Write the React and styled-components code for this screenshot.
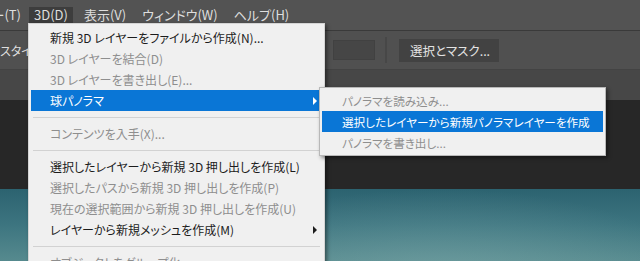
import React from "react";
import styled, { createGlobalStyle } from "styled-components";

const GlobalStyle = createGlobalStyle`
  html, body {
    margin: 0;
    padding: 0;
    background: #282828;
    overflow: hidden;
  }
  body {
    font-family: "Noto Sans CJK JP", "Noto Sans", sans-serif;
    font-feature-settings: "palt";
  }
`;

const Screen = styled.div`
  width: 640px;
  height: 261px;
  display: flex;
  flex-direction: column;
  overflow: hidden;
  position: relative;
`;

const MenuBar = styled.div`
  height: 31px;
  box-sizing: border-box;
  padding-top: 7px;
  display: flex;
  align-items: flex-start;
  gap: 6px;
  background: #535353;
  border-bottom: 1px solid #3a3a3a;
  flex-shrink: 0;
`;

const MenuTitle = styled.div`
  position: relative;
  height: 16px;
  line-height: 16px;
  padding: 0 5px;
  font-size: 13px;
  color: #dedede;
  white-space: nowrap;
  background: ${(p) => (p.$open ? "#3d3d3d" : "transparent")};
`;

const CutTitle = styled(MenuTitle)`
  width: 21px;
  padding: 0 2px 0 0;
  overflow: hidden;
  display: flex;
  justify-content: flex-end;
`;

const OptionsBar = styled.div`
  height: 38px;
  flex-shrink: 0;
  display: flex;
  align-items: center;
  background: #505050;
  border-bottom: 1px solid #434343;
  color: #dedede;
  font-size: 12px;
`;

const OptionLabel = styled.div`
  flex: 0 0 333px;
  white-space: nowrap;
  overflow: hidden;
`;

const Field = styled.div`
  width: 42px;
  height: 20px;
  box-sizing: border-box;
  background: #464646;
  border: 1px solid #414141;
`;

const Divider = styled.div`
  width: 2px;
  height: 26px;
  margin: 0 12px 0 10px;
  background: #474747;
`;

const Button = styled.div`
  width: 100px;
  height: 23px;
  box-sizing: border-box;
  padding-left: 11px;
  line-height: 23px;
  background: #424242;
  color: #e2e2e2;
  font-size: 12.5px;
  white-space: nowrap;
`;

const TabStrip = styled.div`
  height: 30px;
  flex-shrink: 0;
  background: #474747;
`;

const Pasteboard = styled.div`
  height: 89px;
  flex-shrink: 0;
  background: #272727;
`;

const Canvas = styled.div`
  flex: 1;
  background:
    radial-gradient(ellipse 260px 90px at 440px 90px, rgba(140, 180, 180, 0.4), rgba(140, 180, 180, 0) 100%),
    linear-gradient(to bottom, #2c6370 0%, #3d7580 50%, #568a8e 100%);
`;

const Dropdown = styled.div`
  position: absolute;
  left: -1px;
  top: 100%;
  width: 297px;
  box-sizing: border-box;
  padding: 3px 2px;
  background: #f0f0f0;
  border: 1px solid #d4d4d4;
  box-shadow: 2px 2px 4px rgba(0, 0, 0, 0.45);
  z-index: 10;
`;

const Item = styled.div`
  position: relative;
  height: 21px;
  display: flex;
  align-items: center;
  padding: 0 5px 0 19px;
  font-size: 12px;
  white-space: nowrap;
  color: ${(p) => (p.$active ? "#ffffff" : p.$disabled ? "#8e8e8e" : "#1c1c1c")};
  background: ${(p) => (p.$active ? "#0a76d6" : "transparent")};
`;

const ItemLabel = styled.span`
  flex: 1;
`;

const Arrow = styled.span`
  width: 0;
  height: 0;
  border-top: 4px solid transparent;
  border-bottom: 4px solid transparent;
  border-left: 4px solid ${(p) => (p.$light ? "#ffffff" : "#1c1c1c")};
`;

const Separator = styled.div`
  height: 12px;
  display: flex;
  align-items: center;
  padding: 0 2px;
  &::after {
    content: "";
    flex: 1;
    height: 1px;
    background: #d2d2d2;
  }
`;

const SubMenu = styled.div`
  position: absolute;
  left: 288px;
  top: -3px;
  width: 287px;
  box-sizing: border-box;
  padding: 2px 2px;
  background: #f0f0f0;
  border: 1px solid #b8b8b8;
  box-shadow: 2px 2px 4px rgba(0, 0, 0, 0.45);
  z-index: 11;
`;

const SubItem = styled(Item)`
  padding-left: 20px;
  font-size: 11.6px;
`;

const menuItems = [
  { label: "新規 3D レイヤーをファイルから作成(N)..." },
  { label: "3D レイヤーを結合(D)", disabled: true },
  { label: "3D レイヤーを書き出し(E)...", disabled: true },
  { label: "球パノラマ", active: true, sub: true, open: true },
  "sep",
  { label: "コンテンツを入手(X)...", disabled: true },
  "sep",
  { label: "選択したレイヤーから新規 3D 押し出しを作成(L)" },
  { label: "選択したパスから新規 3D 押し出しを作成(P)", disabled: true },
  { label: "現在の選択範囲から新規 3D 押し出しを作成(U)", disabled: true },
  { label: "レイヤーから新規メッシュを作成(M)", sub: true },
  "sep",
  { label: "オブジェクトをグループ化", disabled: true },
];

const panoramaItems = [
  { label: "パノラマを読み込み...", disabled: true },
  { label: "選択したレイヤーから新規パノラマレイヤーを作成", active: true },
  { label: "パノラマを書き出し...", disabled: true },
];

const App = () => {
  return (
    <>
      <GlobalStyle />
      <Screen>
        <MenuBar>
          <CutTitle>
            <span>フィルター(T)</span>
          </CutTitle>
          <MenuTitle $open>
            3D(D)
            <Dropdown>
              {menuItems.map((it, i) =>
                it === "sep" ? (
                  <Separator key={i} />
                ) : (
                  <Item key={i} $active={it.active} $disabled={it.disabled}>
                    <ItemLabel>{it.label}</ItemLabel>
                    {it.sub && <Arrow $light={it.active} />}
                    {it.open && (
                      <SubMenu>
                        {panoramaItems.map((s, j) => (
                          <SubItem key={j} $active={s.active} $disabled={s.disabled}>
                            <ItemLabel>{s.label}</ItemLabel>
                          </SubItem>
                        ))}
                      </SubMenu>
                    )}
                  </Item>
                )
              )}
            </Dropdown>
          </MenuTitle>
          <MenuTitle>表示(V)</MenuTitle>
          <MenuTitle>ウィンドウ(W)</MenuTitle>
          <MenuTitle>ヘルプ(H)</MenuTitle>
        </MenuBar>
        <OptionsBar>
          <OptionLabel>スタイル:</OptionLabel>
          <Field />
          <Divider />
          <Button>選択とマスク...</Button>
        </OptionsBar>
        <TabStrip />
        <Pasteboard />
        <Canvas />
      </Screen>
    </>
  );
};

export default App;
